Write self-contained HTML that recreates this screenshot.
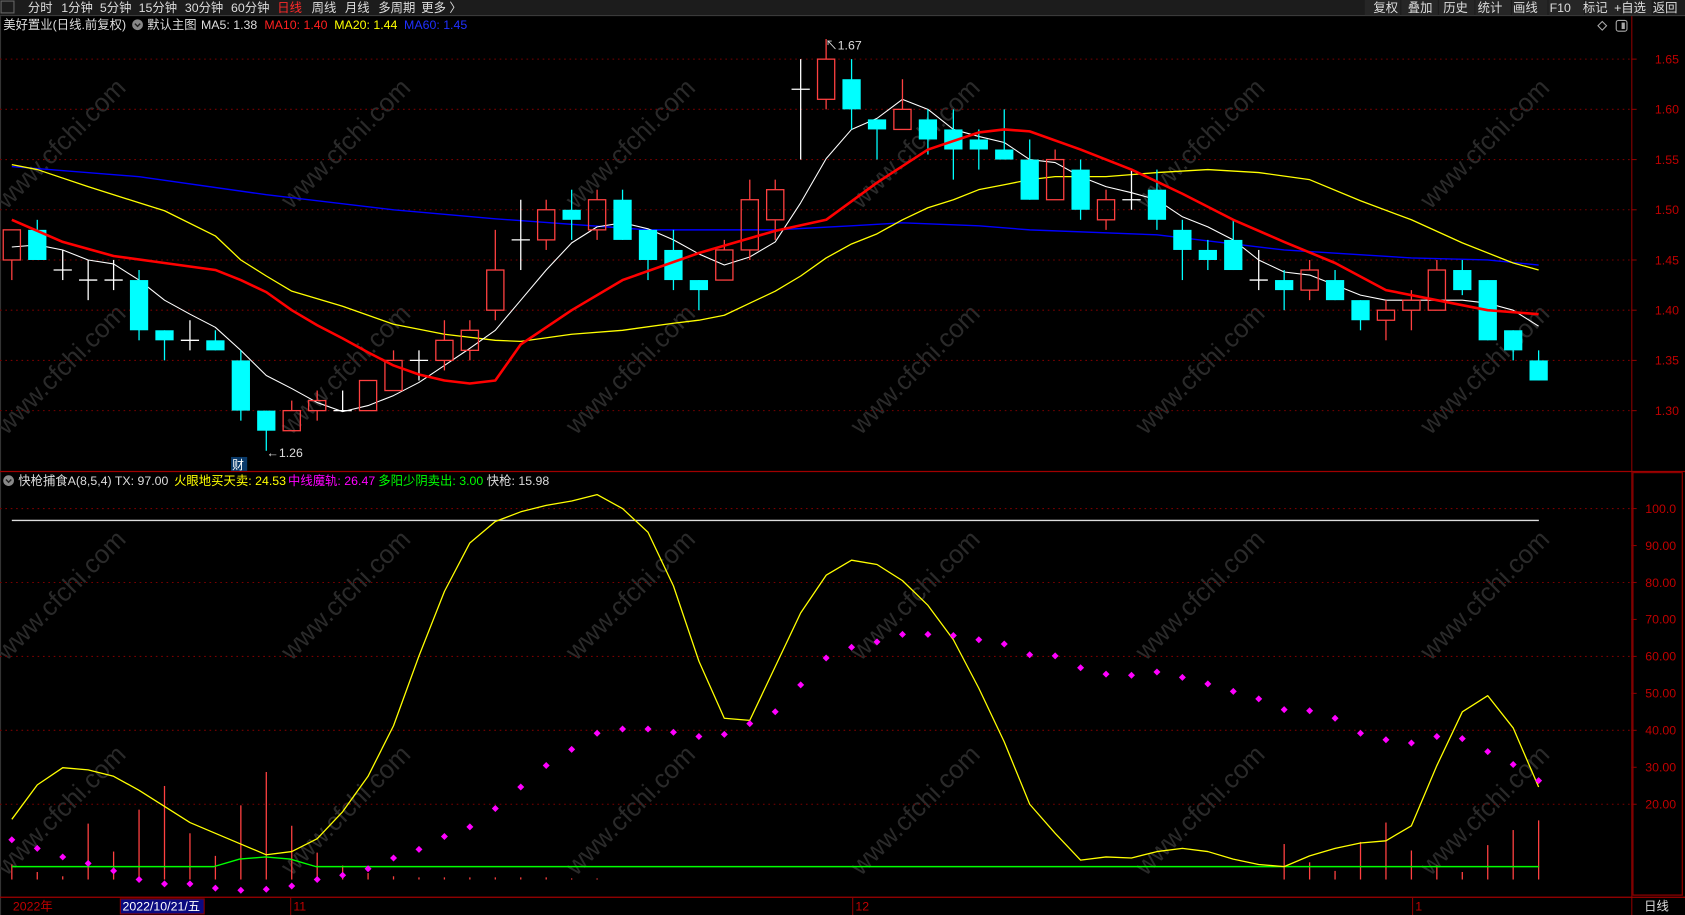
<!DOCTYPE html>
<html><head><meta charset="utf-8"><style>
html,body{margin:0;padding:0;background:#000;overflow:hidden;}
svg{display:block;}
text{font-family:"Liberation Sans","Noto Sans CJK SC",sans-serif;}
</style></head><body>
<svg id="s" width="1685" height="915" viewBox="0 0 1568 851" preserveAspectRatio="none" xmlns="http://www.w3.org/2000/svg">
<rect width="1568" height="851" fill="#000"/>
<!-- top bar -->
<rect x="0" y="0" width="1568" height="14" fill="#1c1c1c"/>
<line x1="0" y1="14.5" x2="1568" y2="14.5" stroke="#3a3a3a"/>
<rect x="1" y="1" width="12" height="11" fill="none" stroke="#666"/>
<g font-size="11.5" fill="#ddd">
<text x="26" y="11">分时</text><text x="57" y="11">1分钟</text><text x="93" y="11">5分钟</text><text x="129" y="11">15分钟</text><text x="172" y="11">30分钟</text><text x="215" y="11">60分钟</text>
<text x="258" y="11" fill="#ff2a2a">日线</text><text x="290" y="11">周线</text><text x="321" y="11">月线</text><text x="352" y="11">多周期</text><text x="392" y="11">更多 〉</text>
</g>
<g font-size="11.5" fill="#ddd">
<rect x="1270" y="0" width="33" height="14" fill="#262626"/><text x="1278" y="11">复权</text>
<rect x="1304" y="0" width="34" height="14" fill="#262626"/><text x="1310" y="11">叠加</text>
<rect x="1339" y="0" width="33" height="14" fill="#262626"/><text x="1343" y="11">历史</text>
<rect x="1373" y="0" width="33" height="14" fill="#262626"/><text x="1375" y="11">统计</text>
<rect x="1407" y="0" width="33" height="14" fill="#262626"/><text x="1408" y="11">画线</text>
<rect x="1441" y="0" width="33" height="14" fill="#262626"/><text x="1442" y="11">F10</text>
<rect x="1475" y="0" width="33" height="14" fill="#262626"/><text x="1473" y="11">标记</text>
<rect x="1509" y="0" width="28" height="14" fill="#262626"/><text x="1502" y="11">+自选</text>
<text x="1538" y="11">返回</text>
</g>
<!-- info line -->
<g font-size="11.5">
<text x="3" y="27" fill="#ddd">美好置业(日线.前复权)</text>
<circle cx="128" cy="23" r="5" fill="#888"/><path d="M125.5 22 L128 24.5 L130.5 22" stroke="#222" fill="none" stroke-width="1.3"/>
<text x="137" y="27" fill="#ddd">默认主图</text>
<text x="187" y="27" fill="#ddd">MA5: 1.38</text>
<text x="246" y="27" fill="#ff2020">MA10: 1.40</text>
<text x="311" y="27" fill="#ffff00">MA20: 1.44</text>
<text x="376" y="27" fill="#2030ff">MA60: 1.45</text>
</g>
<path d="M1491 20 L1495 24 L1491 28 L1487 24 Z" fill="none" stroke="#aaa"/>
<rect x="1504" y="19" width="10" height="10" rx="2" fill="none" stroke="#aaa"/><rect x="1509" y="21" width="3" height="6" fill="#aaa"/>
<!-- frames -->
<line x1="0.5" y1="15" x2="0.5" y2="851" stroke="#333"/>
<line x1="1518.5" y1="15" x2="1518.5" y2="851" stroke="#8b0000"/>
<line x1="0" y1="438.5" x2="1568" y2="438.5" stroke="#a00000" stroke-width="1.2"/>
<rect x="1519.5" y="439.5" width="46" height="393" fill="none" stroke="#8b0000" stroke-width="1.2"/>
<line x1="0" y1="834.5" x2="1568" y2="834.5" stroke="#a00000" stroke-width="1.2"/>
<g id="wm" font-size="24" fill="#2a2a2a"></g>
<g id="grid"></g>
<g id="chart"></g>
<!-- bottom axis -->
<g font-size="11.5">
<text x="12" y="847" fill="#c00000">2022年</text>
<rect x="112" y="836" width="78" height="14" fill="#0a0a80" stroke="#8b0000"/>
<text x="114" y="847" fill="#fff">2022/10/21/五</text>
<line x1="270.5" y1="835" x2="270.5" y2="851" stroke="#8b0000"/><text x="273" y="847" fill="#c00000">11</text>
<line x1="793.5" y1="835" x2="793.5" y2="851" stroke="#8b0000"/><text x="796" y="847" fill="#c00000">12</text>
<line x1="1314.5" y1="835" x2="1314.5" y2="851" stroke="#8b0000"/><text x="1317" y="847" fill="#c00000">1</text>
<text x="1530" y="847" fill="#ddd">日线</text>
</g>
<rect x="215" y="425" width="15" height="13" fill="#0a3a6a"/><text x="216" y="436" font-size="11" fill="#fff">财</text>
<text x="248" y="425" font-size="11.5" fill="#ddd">←1.26</text>
<text x="768" y="46" font-size="11.5" fill="#ddd">↖1.67</text>
<!-- indicator header -->
<g font-size="11.5">
<circle cx="8" cy="447" r="5" fill="#888"/><path d="M5.5 446 L8 448.5 L10.5 446" stroke="#222" fill="none" stroke-width="1.3"/>
<text x="17" y="451" fill="#ddd">快枪捕食A(8,5,4)  TX: 97.00</text>
<text x="162" y="451" fill="#ffff00">火眼地买天卖: 24.53</text>
<text x="268" y="451" fill="#ff00ff">中线魔轨: 26.47</text>
<text x="352" y="451" fill="#00ff00">多阳少阴卖出: 3.00</text>
<text x="453" y="451" fill="#ddd">快枪: 15.98</text>
</g>
</svg>
<script>
(function(){
var NS="http://www.w3.org/2000/svg";
function el(p,t,a,txt){var e=document.createElementNS(NS,t);for(var k in a)e.setAttribute(k,a[k]);if(txt!=null)e.textContent=txt;p.appendChild(e);return e;}
var g=document.getElementById('chart'),gr=document.getElementById('grid'),wm=document.getElementById('wm');
function X(i){return 11+23.68*i;}
function Y(p){return 55+(1.65-p)*934;}
function V(v){return 473+(100-v)*3.4375;}
// watermarks
var rows=[140,350,560,760],cols=[50,315,580,845,1110,1375];
rows.forEach(function(r){cols.forEach(function(c){el(wm,'text',{x:c-70,y:r+8,transform:'rotate(-45 '+c+' '+r+')'},'www.cfchi.com');});});
// price grid
for(var k=0;k<8;k++){var p=1.65-0.05*k,y=Y(p);
el(gr,'line',{x1:0,y1:y,x2:1518,y2:y,stroke:'#7a0000','stroke-dasharray':'1.5 3.5'});
el(gr,'line',{x1:1518,y1:y,x2:1523,y2:y,stroke:'#8b0000'});
el(gr,'text',{x:1540,y:y+4,'font-size':11.5,fill:'#c00000'},p.toFixed(2));}
[100,90,80,70,60,50,40,30,20].forEach(function(v){var y=V(v);
if(v%20==0)el(gr,'line',{x1:0,y1:y,x2:1518,y2:y,stroke:'#7a0000','stroke-dasharray':'1.5 3.5'});
el(gr,'line',{x1:1518,y1:y,x2:1523,y2:y,stroke:'#8b0000'});
el(gr,'text',{x:1531,y:y+4,'font-size':11.5,fill:'#c00000'},v==100?'100.0':v.toFixed(2));});
// candles: type, o/c top, bottom, hi, lo
var C=[['r',1.48,1.45,1.48,1.43],['c',1.48,1.45,1.49,1.45],['w',1.44,1.44,1.46,1.43],['w',1.43,1.43,1.45,1.41],['w',1.43,1.43,1.45,1.42],
['c',1.43,1.38,1.44,1.37],['c',1.38,1.37,1.38,1.35],['w',1.37,1.37,1.39,1.36],['c',1.37,1.36,1.38,1.36],['c',1.35,1.30,1.36,1.29],
['c',1.30,1.28,1.30,1.26],['r',1.30,1.28,1.31,1.28],['r',1.31,1.30,1.32,1.29],['w',1.30,1.30,1.32,1.30],['r',1.33,1.30,1.33,1.30],
['r',1.35,1.32,1.36,1.32],['w',1.35,1.35,1.36,1.33],['r',1.37,1.35,1.39,1.34],['r',1.38,1.36,1.39,1.35],['r',1.44,1.40,1.48,1.39],
['w',1.47,1.47,1.51,1.44],['r',1.50,1.47,1.51,1.46],['c',1.50,1.49,1.52,1.47],['r',1.51,1.48,1.52,1.47],['c',1.51,1.47,1.52,1.47],
['c',1.48,1.45,1.48,1.43],['c',1.46,1.43,1.48,1.42],['c',1.43,1.42,1.43,1.40],['r',1.46,1.43,1.47,1.43],['r',1.51,1.46,1.53,1.45],
['r',1.52,1.49,1.53,1.47],['w',1.62,1.62,1.65,1.55],['r',1.65,1.61,1.67,1.60],['c',1.63,1.60,1.65,1.58],['c',1.59,1.58,1.59,1.55],
['r',1.60,1.58,1.63,1.58],['c',1.59,1.57,1.60,1.555],['c',1.58,1.56,1.60,1.53],['c',1.57,1.56,1.58,1.54],['c',1.56,1.55,1.60,1.55],
['c',1.55,1.51,1.57,1.51],['r',1.55,1.51,1.56,1.51],['c',1.54,1.50,1.55,1.49],['r',1.51,1.49,1.52,1.48],['w',1.51,1.51,1.54,1.50],
['c',1.52,1.49,1.54,1.48],['c',1.48,1.46,1.49,1.43],['c',1.46,1.45,1.47,1.44],['c',1.47,1.44,1.49,1.44],['w',1.43,1.43,1.46,1.42],
['c',1.43,1.42,1.44,1.40],['r',1.44,1.42,1.45,1.41],['c',1.43,1.41,1.44,1.41],['c',1.41,1.39,1.41,1.38],['r',1.40,1.39,1.41,1.37],
['r',1.41,1.40,1.42,1.38],['r',1.44,1.40,1.45,1.40],['c',1.44,1.42,1.45,1.415],['c',1.43,1.37,1.43,1.37],['c',1.38,1.36,1.38,1.35],
['c',1.35,1.33,1.36,1.33]];
function poly(pts,col,w){el(g,'polyline',{points:pts.join(' '),fill:'none',stroke:col,'stroke-width':w,'stroke-linejoin':'round'});}
function pl(arr,col,w){var pts=[];for(var i=0;i<arr.length;i++)pts.push(X(arr[i][0]).toFixed(1)+','+Y(arr[i][1]).toFixed(1));poly(pts,col,w);}
// MA60
pl([[0,1.543],[5,1.533],[10,1.515],[15,1.50],[19,1.491],[25,1.48],[30,1.48],[33,1.484],[35,1.487],[38,1.484],[40,1.48],[45,1.475],[50,1.46],[55,1.452],[58,1.45],[60,1.445]],'#0000ff',1.3);
// MA20
pl([[0,1.545],[1,1.54],[3,1.523],[5,1.507],[6,1.499],[8,1.474],[9,1.45],[10,1.434],[11,1.419],[13,1.404],[15,1.386],[17,1.376],[19,1.37],[20,1.369],[22,1.376],[24,1.38],[26,1.387],[27,1.39],[28,1.395],[29,1.407],[30,1.419],[31,1.434],[32,1.452],[33,1.466],[34,1.476],[35,1.49],[36,1.502],[37,1.51],[38,1.52],[39,1.525],[40,1.53],[41,1.533],[43,1.533],[45,1.537],[47,1.54],[49,1.537],[51,1.53],[53,1.509],[55,1.49],[57,1.467],[59,1.447],[60,1.44]],'#ffff00',1.2);
// MA5
var m5=[1.463,1.465,1.46,1.45,1.446,1.43,1.41,1.396,1.383,1.36,1.335,1.322,1.308,1.299,1.305,1.315,1.328,1.345,1.362,1.38,1.41,1.44,1.467,1.483,1.487,1.481,1.47,1.456,1.445,1.453,1.468,1.507,1.551,1.58,1.591,1.61,1.60,1.58,1.573,1.567,1.55,1.547,1.533,1.523,1.517,1.51,1.493,1.483,1.47,1.45,1.438,1.435,1.425,1.415,1.41,1.41,1.41,1.41,1.407,1.40,1.384];
pl(m5.map(function(v,i){return [i,v];}),'#ffffff',1);
// candles
C.forEach(function(c,i){var x=X(i),t=Y(c[1]),b=Y(c[2]),h=Y(c[3]),l=Y(c[4]),w=8.5;
if(c[0]=='w'){el(g,'line',{x1:x,y1:h,x2:x,y2:l,stroke:'#fff','stroke-width':1.2});el(g,'line',{x1:x-w,y1:t,x2:x+w,y2:t,stroke:'#fff','stroke-width':1.2});}
else if(c[0]=='r'){el(g,'line',{x1:x,y1:h,x2:x,y2:t,stroke:'#ff4040','stroke-width':1.2});el(g,'line',{x1:x,y1:b,x2:x,y2:l,stroke:'#ff4040','stroke-width':1.2});
el(g,'rect',{x:x-w+0.5,y:t,width:2*w-1,height:Math.max(b-t,1),fill:'none',stroke:'#ff4040','stroke-width':1.2});}
else{el(g,'line',{x1:x,y1:h,x2:x,y2:l,stroke:'#00ffff','stroke-width':1.2});el(g,'rect',{x:x-w,y:t,width:2*w,height:Math.max(b-t,2),fill:'#00ffff'});}
});
// MA10 (drawn on top)
pl([[0,1.49],[2,1.468],[4,1.454],[6,1.447],[8,1.44],[9,1.43],[10,1.418],[11,1.40],[12,1.385],[13,1.372],[14,1.358],[15,1.345],[16,1.336],[17,1.33],[18,1.327],[19,1.33],[20,1.366],[22,1.40],[24,1.43],[27,1.457],[30,1.479],[32,1.49],[34,1.527],[36,1.56],[38,1.577],[39,1.58],[40,1.578],[42,1.56],[44,1.54],[46,1.516],[48,1.49],[50,1.468],[52,1.447],[54,1.42],[56,1.41],[58,1.40],[60,1.396]],'#ff0000',2.4);
// lower panel
el(g,'line',{x1:11,y1:484,x2:1432,y2:484,stroke:'#ddd','stroke-width':1.3});
var bt=[804,811,815,766,792,753,731,775,796,749,718,768,793,805,812,815,816,816,816,816,816,816,817,817];
var vb={50:785,51:802,52:810,53:783,54:765,55:791,56:805,57:811,58:786,59:772,60:763};
for(var i=0;i<bt.length;i++)el(g,'line',{x1:X(i),y1:bt[i],x2:X(i),y2:818,stroke:'#ff4040','stroke-width':1.2});
for(var k in vb)el(g,'line',{x1:X(+k),y1:vb[k],x2:X(+k),y2:818,stroke:'#ff4040','stroke-width':1.2});
poly(['11,806','199,806','223,799','247,797','270,799','294,806','1432,806'],'#00ff00',1.3);
var yl=[762,730,714,716,722,735,750,765,775,785,795,792,780,755,722,675,610,550,505,485,476,470,466,460,473,495,545,615,668,670,620,570,535,521,525,540,563,595,640,690,748,775,800,797,798,792,789,792,799,804,806,796,789,784,782,768,712,662,647,677,732];
poly(yl.map(function(v,i){return X(i).toFixed(1)+','+v;}),'#ffff00',1.2);
var dl=[781,789,797,803,810,818,822,822,826,828,827,824,818,814,808,798,790,778,769,752,732,712,697,682,678,678,681,685,683,673,662,637,612,602,597,590,590,591,595,599,609,610,621,627,628,625,630,636,643,650,660,661,668,682,688,691,685,687,699,711,726];
dl.forEach(function(v,i){el(g,'rect',{x:X(i)-2.3,y:v-2.3,width:4.6,height:4.6,fill:'#ff00ff',transform:'rotate(45 '+X(i)+' '+v+')'});});
})();
</script>
</body></html>
